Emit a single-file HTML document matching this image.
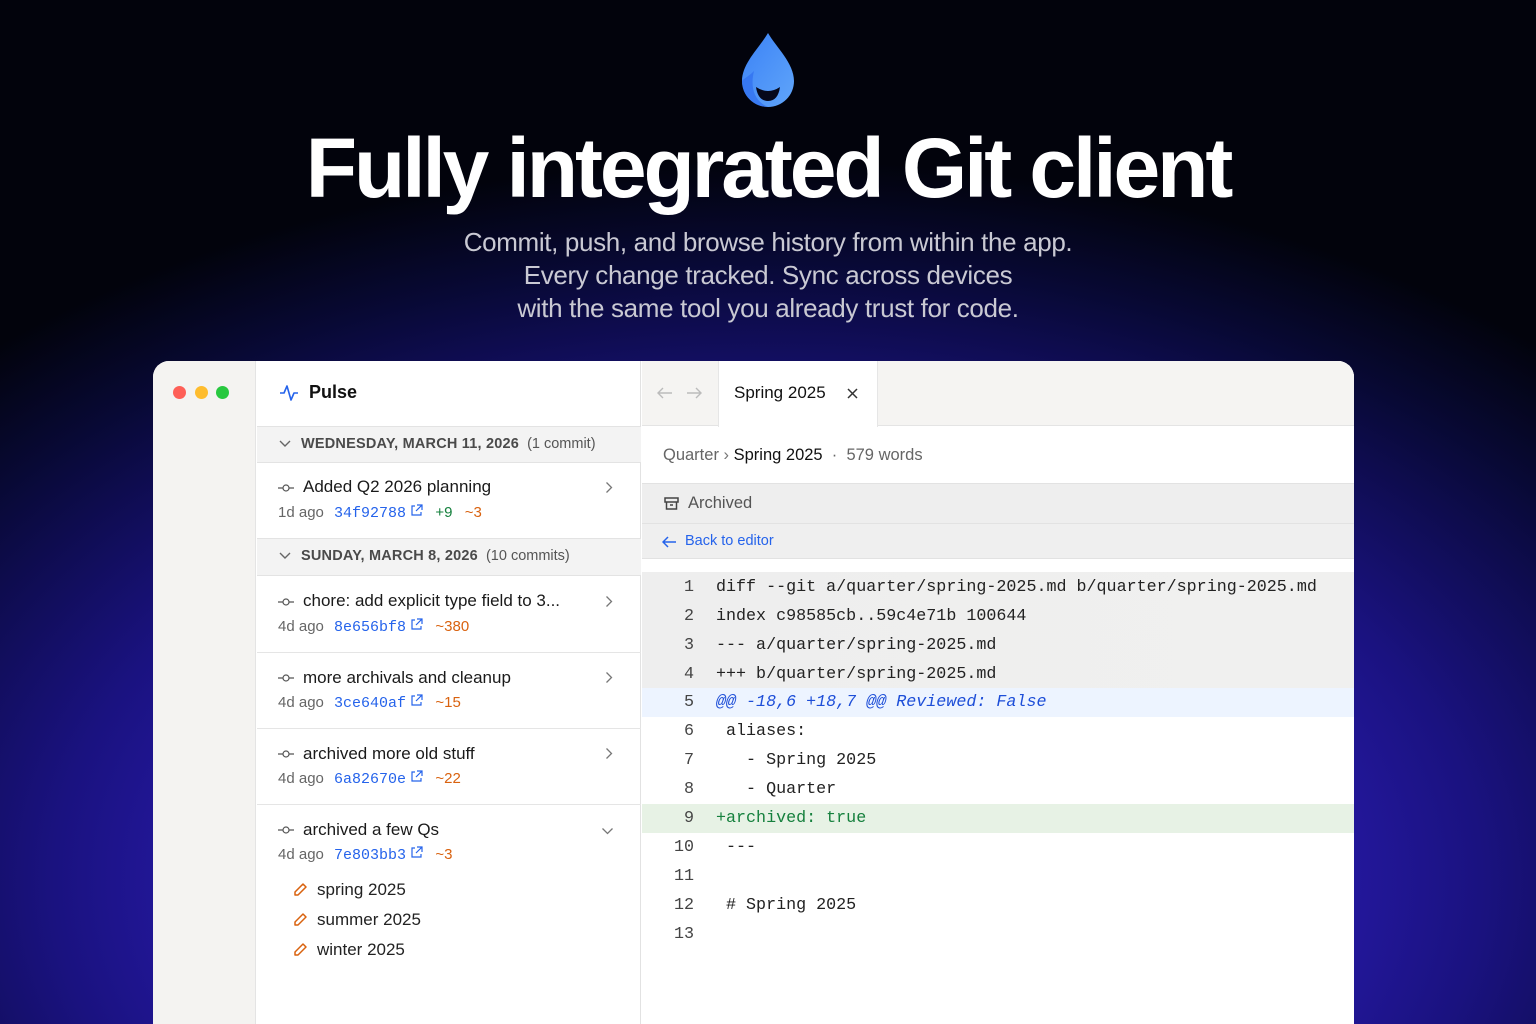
<!DOCTYPE html>
<html style="width:1536px;height:1024px;overflow:hidden"><head><meta charset="utf-8"><style>
*{margin:0;padding:0;box-sizing:border-box}
body{width:1536px;height:1024px;overflow:hidden;position:relative;font-family:"Liberation Sans",sans-serif;
background:radial-gradient(ellipse 1150px 720px at 768px 880px,#3823d0 0%,#2f1ec0 35%,#1a1280 62%,#080935 86%,#02030c 100%),#02030c;}
.abs{position:absolute}
h1{position:absolute;left:0;width:1536px;top:118px;text-align:center;color:#fff;font-size:84px;font-weight:bold;letter-spacing:-3.1px;line-height:100px}
.sub{position:absolute;left:0;width:1536px;top:226px;text-align:center;color:#c9c9d3;font-size:26px;letter-spacing:-0.35px;line-height:33px}
.win{position:absolute;left:153px;top:361px;width:1201px;height:663px;background:#fff;border-radius:16px 16px 0 0;overflow:hidden}
.side{position:absolute;left:0;top:0;width:103px;height:663px;background:#f4f3f1;border-right:1px solid #e4e4e4}
.dot{position:absolute;top:25px;width:13px;height:13px;border-radius:50%}
.mid{position:absolute;left:104px;top:0;width:384px;height:663px;background:#fff;border-right:1px solid #e2e2e2}
.hdr{position:absolute;left:0;width:384px;height:37px;background:#f3f3f3;border-top:1px solid #e3e3e3;border-bottom:1px solid #e3e3e3;font-size:14.5px;color:#555;line-height:35px;padding-left:44px}
.hdr b{color:#4a4a4a;letter-spacing:.2px}
.hdr svg{position:absolute;left:22px;top:13px}
.row{position:absolute;left:0;width:384px;border-bottom:1px solid #e5e5e5}
.t{position:absolute;left:46px;font-size:17px;color:#1a1a1a}
.m{position:absolute;left:21px;font-size:15px;color:#666;white-space:nowrap}
.m .h{color:#2563eb;font-family:"Liberation Mono",monospace;font-size:15px;margin-left:6px}
.g{color:#15803d;margin-left:8px}.o{color:#d9620f;margin-left:8px}
.ci{position:absolute;left:21px}
.chev{position:absolute;left:348px}
.right{position:absolute;left:489px;top:0;width:712px;height:663px;background:#fff}
.code{position:absolute;left:0;width:712px;height:29px;font-family:"Liberation Mono",monospace;font-size:16.7px;line-height:29px;color:#222;white-space:pre}
.code .n{position:absolute;right:660px;color:#444;text-align:right}
.code .c{position:absolute;left:74px}
</style></head><body>
<svg class="abs" style="left:740px;top:31px" width="56" height="78" viewBox="0 0 56 78">
<defs><linearGradient id="dg" x1="0" y1="0" x2="1" y2="1"><stop offset="0" stop-color="#3b82f6"/><stop offset="1" stop-color="#60a5fa"/></linearGradient></defs>
<path d="M28 2 C20 16 2 32 2 50 A26 26 0 0 0 54 50 C54 32 36 16 28 2Z" fill="url(#dg)"/>
<path d="M2 50 A26 26 0 0 0 28 76 C14 70 10 56 14 40 C8 46 3 48 2 50Z" fill="#2f6df0" opacity=".7"/>
<path d="M16 56 Q28 64 40 56 Q38 70 28 70 Q18 70 16 56Z" fill="#06081a"/>
</svg>
<h1>Fully integrated Git client</h1>
<div class="sub">Commit, push, and browse history from within the app.<br>Every change tracked. Sync across devices<br>with the same tool you already trust for code.</div>

<div class="win">
 <div class="side">
  <div class="dot" style="left:20px;background:#fe5f57"></div>
  <div class="dot" style="left:42px;background:#febc2e"></div>
  <div class="dot" style="left:63px;background:#28c840"></div>
 </div>
 <div class="mid">
  <svg class="abs" style="left:22px;top:23px" width="20" height="18" viewBox="0 0 20 18"><path d="M1 9h4l3-7 4 14 3-7h4" fill="none" stroke="#2563eb" stroke-width="1.6" stroke-linejoin="round"/></svg>
  <div class="abs" style="left:52px;top:21px;font-size:18px;font-weight:bold;color:#111">Pulse</div>

  <div class="hdr" style="top:65px"><svg width="12" height="8" viewBox="0 0 12 8"><path d="M1 1l5 5 5-5" fill="none" stroke="#666" stroke-width="1.4"/></svg><b>WEDNESDAY, MARCH 11, 2026</b>&nbsp; (1 commit)</div>

  <div class="row" style="top:102px;height:76px">
   <svg class="ci" style="top:21px" width="16" height="8" viewBox="0 0 16 8"><path d="M0 4h5M11 4h5" stroke="#555" stroke-width="1.2"/><circle cx="8" cy="4" r="3" fill="none" stroke="#555" stroke-width="1.2"/></svg>
   <div class="t" style="top:14px">Added Q2 2026 planning</div>
   <svg class="chev" style="top:18px" width="8" height="13" viewBox="0 0 8 13"><path d="M1.5 1.5l5 5-5 5" fill="none" stroke="#777" stroke-width="1.3"/></svg>
   <div class="m" style="top:41px">1d ago <span class="h">34f92788</span> <svg width="13" height="13" viewBox="0 0 13 13"><path d="M5 2H2v9h9V8M7 1h5v5M12 1L6 7" fill="none" stroke="#2563eb" stroke-width="1.2"/></svg> <span class="g">+9</span> <span class="o">~3</span></div>
  </div>

  <div class="hdr" style="top:177px;height:38px"><svg width="12" height="8" viewBox="0 0 12 8"><path d="M1 1l5 5 5-5" fill="none" stroke="#666" stroke-width="1.4"/></svg><b>SUNDAY, MARCH 8, 2026</b>&nbsp; (10 commits)</div>

  <div class="row" style="top:215px;height:77px">
   <svg class="ci" style="top:22px" width="16" height="8" viewBox="0 0 16 8"><path d="M0 4h5M11 4h5" stroke="#555" stroke-width="1.2"/><circle cx="8" cy="4" r="3" fill="none" stroke="#555" stroke-width="1.2"/></svg>
   <div class="t" style="top:15px">chore: add explicit type field to 3...</div>
   <svg class="chev" style="top:19px" width="8" height="13" viewBox="0 0 8 13"><path d="M1.5 1.5l5 5-5 5" fill="none" stroke="#777" stroke-width="1.3"/></svg>
   <div class="m" style="top:42px">4d ago <span class="h">8e656bf8</span> <svg width="13" height="13" viewBox="0 0 13 13"><path d="M5 2H2v9h9V8M7 1h5v5M12 1L6 7" fill="none" stroke="#2563eb" stroke-width="1.2"/></svg> <span class="o">~380</span></div>
  </div>
  <div class="row" style="top:292px;height:76px">
   <svg class="ci" style="top:21px" width="16" height="8" viewBox="0 0 16 8"><path d="M0 4h5M11 4h5" stroke="#555" stroke-width="1.2"/><circle cx="8" cy="4" r="3" fill="none" stroke="#555" stroke-width="1.2"/></svg>
   <div class="t" style="top:15px">more archivals and cleanup</div>
   <svg class="chev" style="top:18px" width="8" height="13" viewBox="0 0 8 13"><path d="M1.5 1.5l5 5-5 5" fill="none" stroke="#777" stroke-width="1.3"/></svg>
   <div class="m" style="top:41px">4d ago <span class="h">3ce640af</span> <svg width="13" height="13" viewBox="0 0 13 13"><path d="M5 2H2v9h9V8M7 1h5v5M12 1L6 7" fill="none" stroke="#2563eb" stroke-width="1.2"/></svg> <span class="o">~15</span></div>
  </div>
  <div class="row" style="top:368px;height:76px">
   <svg class="ci" style="top:21px" width="16" height="8" viewBox="0 0 16 8"><path d="M0 4h5M11 4h5" stroke="#555" stroke-width="1.2"/><circle cx="8" cy="4" r="3" fill="none" stroke="#555" stroke-width="1.2"/></svg>
   <div class="t" style="top:15px">archived more old stuff</div>
   <svg class="chev" style="top:18px" width="8" height="13" viewBox="0 0 8 13"><path d="M1.5 1.5l5 5-5 5" fill="none" stroke="#777" stroke-width="1.3"/></svg>
   <div class="m" style="top:41px">4d ago <span class="h">6a82670e</span> <svg width="13" height="13" viewBox="0 0 13 13"><path d="M5 2H2v9h9V8M7 1h5v5M12 1L6 7" fill="none" stroke="#2563eb" stroke-width="1.2"/></svg> <span class="o">~22</span></div>
  </div>
  <div class="row" style="top:444px;height:230px;border:none">
   <svg class="ci" style="top:21px" width="16" height="8" viewBox="0 0 16 8"><path d="M0 4h5M11 4h5" stroke="#555" stroke-width="1.2"/><circle cx="8" cy="4" r="3" fill="none" stroke="#555" stroke-width="1.2"/></svg>
   <div class="t" style="top:15px">archived a few Qs</div>
   <svg class="abs" style="left:344px;top:22px" width="13" height="8" viewBox="0 0 13 8"><path d="M1.5 1.5l5 5 5-5" fill="none" stroke="#777" stroke-width="1.3"/></svg>
   <div class="m" style="top:41px">4d ago <span class="h">7e803bb3</span> <svg width="13" height="13" viewBox="0 0 13 13"><path d="M5 2H2v9h9V8M7 1h5v5M12 1L6 7" fill="none" stroke="#2563eb" stroke-width="1.2"/></svg> <span class="o">~3</span></div>
   <svg class="abs" style="left:36px;top:77px" width="15" height="15" viewBox="0 0 15 15"><path d="M10 2l3 3-8 8H2v-3z" fill="none" stroke="#d9620f" stroke-width="1.5" stroke-linejoin="round"/></svg>
   <div class="abs" style="left:60px;top:75px;font-size:17px;color:#222">spring 2025</div>
   <svg class="abs" style="left:36px;top:107px" width="15" height="15" viewBox="0 0 15 15"><path d="M10 2l3 3-8 8H2v-3z" fill="none" stroke="#d9620f" stroke-width="1.5" stroke-linejoin="round"/></svg>
   <div class="abs" style="left:60px;top:105px;font-size:17px;color:#222">summer 2025</div>
   <svg class="abs" style="left:36px;top:137px" width="15" height="15" viewBox="0 0 15 15"><path d="M10 2l3 3-8 8H2v-3z" fill="none" stroke="#d9620f" stroke-width="1.5" stroke-linejoin="round"/></svg>
   <div class="abs" style="left:60px;top:135px;font-size:17px;color:#222">winter 2025</div>
  </div>
 </div>

 <div class="right">
  <div class="abs" style="left:0;top:0;width:712px;height:65px;background:#f5f4f2;border-bottom:1px solid #e4e4e4"></div>
  <svg class="abs" style="left:15px;top:26px" width="16" height="12" viewBox="0 0 16 12"><path d="M15 6H2M6 1L1 6l5 5" fill="none" stroke="#bbb" stroke-width="1.4"/></svg>
  <svg class="abs" style="left:44px;top:26px" width="16" height="12" viewBox="0 0 16 12"><path d="M1 6h13M10 1l5 5-5 5" fill="none" stroke="#bbb" stroke-width="1.4"/></svg>
  <div class="abs" style="left:76px;top:0;width:160px;height:66px;background:#fff;border-left:1px solid #e6e6e6;border-right:1px solid #e6e6e6"></div>
  <div class="abs" style="left:92px;top:22px;font-size:17px;color:#111">Spring 2025</div>
  <svg class="abs" style="left:205px;top:27px" width="11" height="11" viewBox="0 0 11 11"><path d="M1 1l9 9M10 1l-9 9" stroke="#333" stroke-width="1.5"/></svg>

  <div class="abs" style="left:21px;top:85px;font-size:16.5px;color:#666">Quarter <span style="color:#777">›</span> <span style="color:#111">Spring 2025</span> &nbsp;·&nbsp; 579 words</div>

  <div class="abs" style="left:0;top:122px;width:712px;height:41px;background:#eeeeee;border-top:1px solid #e2e2e2;border-bottom:1px solid #e2e2e2"></div>
  <svg class="abs" style="left:22px;top:136px" width="15" height="13" viewBox="0 0 15 13"><rect x="1" y="1" width="13" height="4" fill="none" stroke="#444" stroke-width="1.5"/><path d="M2.5 5v7h10V5M6 8h3" fill="none" stroke="#444" stroke-width="1.5"/></svg>
  <div class="abs" style="left:46px;top:133px;font-size:16.5px;color:#555">Archived</div>
  <div class="abs" style="left:0;top:163px;width:712px;height:35px;background:#efefef;border-bottom:1px solid #e2e2e2"></div>
  <svg class="abs" style="left:20px;top:175px" width="15" height="12" viewBox="0 0 15 12"><path d="M14 6H2M6 1L1 6l5 5" fill="none" stroke="#2563eb" stroke-width="1.5"/></svg>
  <div class="abs" style="left:43px;top:172px;font-size:14.5px;color:#2563eb">Back to editor</div>

  <div class="abs" style="left:0;top:211px;width:712px;height:116px;background:linear-gradient(90deg,#eeeeee,#f0f0ef)"></div>
  <div class="code" style="top:212px"><span class="n">1</span><span class="c">diff --git a/quarter/spring-2025.md b/quarter/spring-2025.md</span></div>
  <div class="code" style="top:241px"><span class="n">2</span><span class="c">index c98585cb..59c4e71b 100644</span></div>
  <div class="code" style="top:270px"><span class="n">3</span><span class="c">--- a/quarter/spring-2025.md</span></div>
  <div class="code" style="top:299px"><span class="n">4</span><span class="c">+++ b/quarter/spring-2025.md</span></div>
  <div class="code" style="top:327px;background:#edf4ff"><span class="n">5</span><span class="c" style="color:#1d4ed8;font-style:italic">@@ -18,6 +18,7 @@ Reviewed: False</span></div>
  <div class="code" style="top:356px"><span class="n">6</span><span class="c"> aliases:</span></div>
  <div class="code" style="top:385px"><span class="n">7</span><span class="c">   - Spring 2025</span></div>
  <div class="code" style="top:414px"><span class="n">8</span><span class="c">   - Quarter</span></div>
  <div class="code" style="top:443px;background:#e7f2e5"><span class="n">9</span><span class="c" style="color:#15803d">+archived: true</span></div>
  <div class="code" style="top:472px"><span class="n">10</span><span class="c"> ---</span></div>
  <div class="code" style="top:501px"><span class="n">11</span><span class="c"> </span></div>
  <div class="code" style="top:530px"><span class="n">12</span><span class="c"> # Spring 2025</span></div>
  <div class="code" style="top:559px"><span class="n">13</span><span class="c"> </span></div>
 </div>
</div>
</body></html>
